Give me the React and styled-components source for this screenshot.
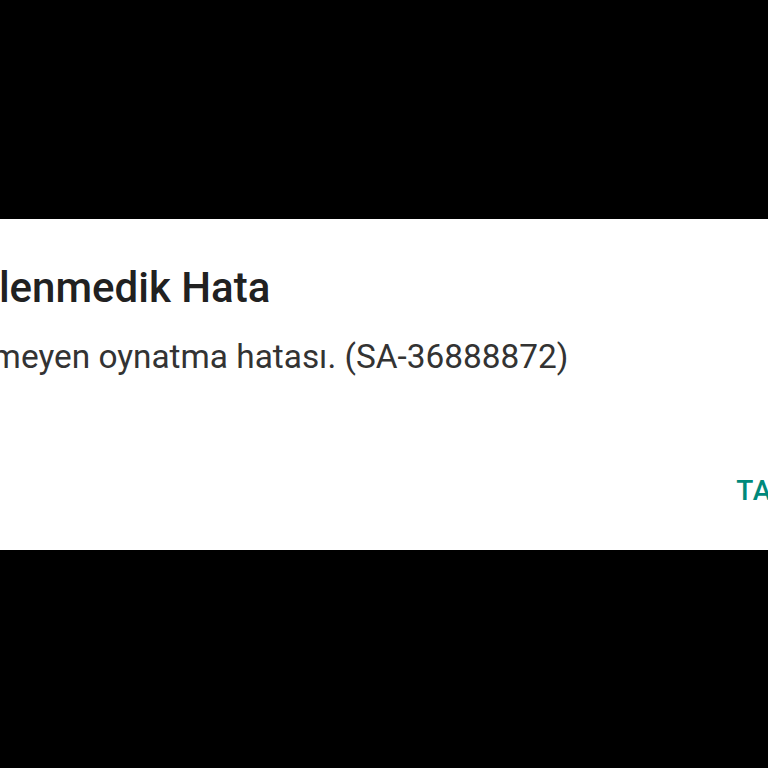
import React from "react";
import styled, { createGlobalStyle } from "styled-components";

const GlobalStyle = createGlobalStyle`
  html, body {
    margin: 0;
    padding: 0;
    background: #000;
  }
`;

const Page = styled.div`
  height: 768px;
  display: flex;
  align-items: center;
  overflow: hidden;
  background: #000;
  font-family: Roboto, "Noto Sans", sans-serif;
`;

const Dialog = styled.div`
  flex: none;
  width: 1000px;
  height: 331px;
  box-sizing: border-box;
  margin-left: -128px;
  padding: 44px 31px 0 56px;
  background: #fff;
  display: flex;
  flex-direction: column;
`;

const Title = styled.h2`
  margin: 0;
  font-size: 42px;
  line-height: 50px;
  font-weight: 500;
  color: #212121;
  white-space: nowrap;
`;

const Message = styled.p`
  margin: 22px 0 0;
  font-size: 33.4px;
  line-height: 44px;
  font-weight: 400;
  color: #333;
  white-space: nowrap;
`;

const Actions = styled.div`
  margin-top: 94px;
  display: flex;
  justify-content: flex-end;
`;

const Button = styled.button`
  border: 0;
  padding: 0;
  background: none;
  font-family: inherit;
  font-size: 28px;
  line-height: 36px;
  font-weight: 500;
  color: #00897b;
  letter-spacing: 0.5px;
  text-transform: uppercase;
`;

export default function App() {
  return (
    <>
      <GlobalStyle />
      <Page>
        <Dialog>
          <Title>Beklenmedik Hata</Title>
          <Message>Bilinmeyen oynatma hatası. (SA-36888872)</Message>
          <Actions>
            <Button>Tamam</Button>
          </Actions>
        </Dialog>
      </Page>
    </>
  );
}
